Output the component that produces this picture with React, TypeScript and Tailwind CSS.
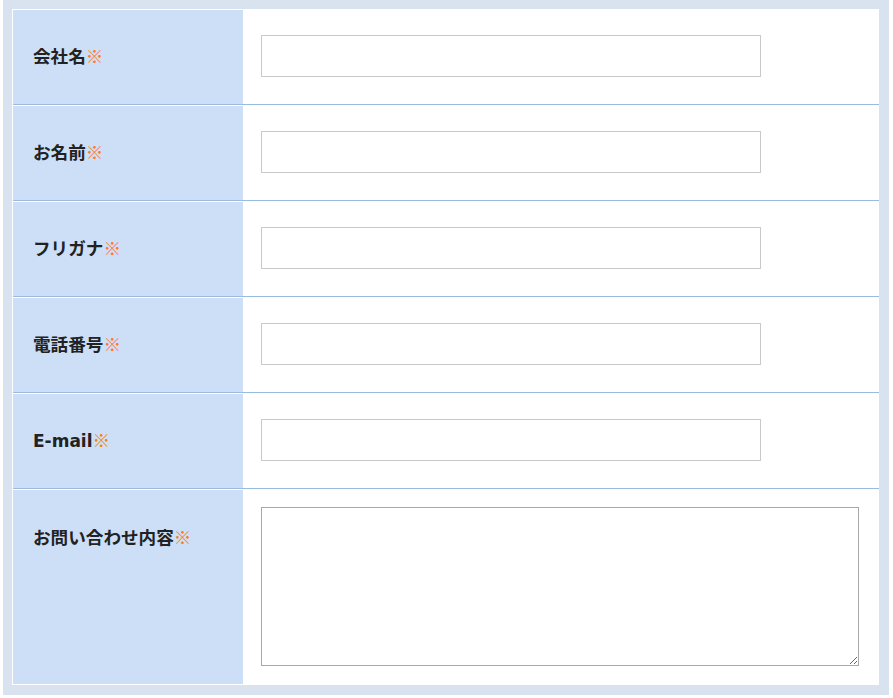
const fields = [
  { label: '会社名', type: 'input' },
  { label: 'お名前', type: 'input' },
  { label: 'フリガナ', type: 'input' },
  { label: '電話番号', type: 'input' },
  { label: 'E-mail', type: 'input' },
  { label: 'お問い合わせ内容', type: 'textarea' },
];

export default function App() {
  return (
    <div className="min-h-[698px] bg-white pl-[3px] pr-[4px] font-['DejaVu_Sans','Noto_Sans_CJK_JP',sans-serif]">
      <div className="bg-[#d9e2ef] pl-[9px] pr-[10px] pt-[9px] pb-[10px]">
        <div className="flex flex-col gap-px bg-white py-px pl-px">
          {fields.map((f, i) => {
            const last = i === fields.length - 1;
            const latin = f.label === 'E-mail';
            return (
              <div
                key={f.label}
                className={`flex ${last ? 'h-[194px]' : 'h-[95px] border-b border-[#99bbe0]'}`}
              >
                <div
                  className={`flex w-[230px] shrink-0 bg-[#cddff7] pl-5 font-bold text-[#222] ${
                    last ? 'items-start pt-[33px]' : 'items-center'
                  }`}
                >
                  <span className="leading-[28px]">
                    {latin ? (
                      <span className="text-[17px]">E-mail</span>
                    ) : (
                      <span className="font-['Noto_Sans_CJK_JP',sans-serif] text-[17.6px]">{f.label}</span>
                    )}
                    <span className="font-['Noto_Sans_CJK_JP',sans-serif] text-[17.6px] font-black text-[#ff7a14]">※</span>
                  </span>
                </div>
                <div
                  className={`flex flex-1 pl-[18px] ${last ? 'items-start pt-[17px] pr-5' : 'items-center pb-[2px]'}`}
                >
                  {last ? (
                    <textarea className="h-[159px] w-[598px] border border-[#a9a9a9] bg-white outline-none" />
                  ) : (
                    <input
                      type="text"
                      className="h-[42px] w-[500px] border border-[#c9c9c9] bg-white outline-none"
                    />
                  )}
                </div>
              </div>
            );
          })}
        </div>
      </div>
    </div>
  );
}
